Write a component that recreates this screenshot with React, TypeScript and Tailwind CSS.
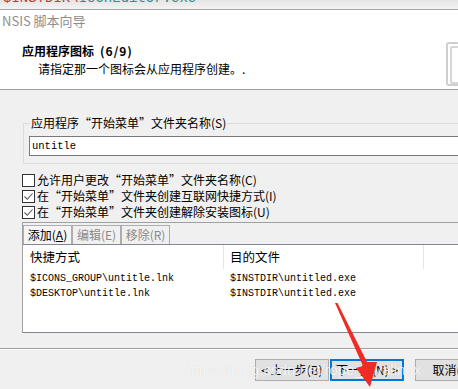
const cjk = "font-['Noto_Sans_CJK_SC','Microsoft_YaHei',sans-serif]";
const mono = "font-['Liberation_Mono','Noto_Sans_CJK_SC',monospace]";

const options = [
  { label: "允许用户更改“开始菜单”文件夹名称(C)", checked: false },
  { label: "在“开始菜单”文件夹创建互联网快捷方式(I)", checked: true },
  { label: "在“开始菜单”文件夹创建解除安装图标(U)", checked: true },
];

const shortcuts = [
  { link: "$ICONS_GROUP\\untitle.lnk", target: "$INSTDIR\\untitled.exe" },
  { link: "$DESKTOP\\untitle.lnk", target: "$INSTDIR\\untitled.exe" },
];

function CheckBox({ checked }: { checked: boolean }) {
  return (
    <div className="w-[13px] h-[13px] border border-[#333] bg-white flex items-center justify-center shrink-0">
      {checked && (
        <svg width="11" height="11" viewBox="0 0 11 11">
          <path d="M1.5 5.5 L4.3 8.3 L9.5 2.5" fill="none" stroke="#555" strokeWidth="1.1" />
        </svg>
      )}
    </div>
  );
}

export default function App() {
  return (
    <div className={`relative w-[458px] h-[389px] overflow-hidden bg-[#f0f0f0] text-[12px] text-black ${cjk}`}>
      {/* edge of the editor window behind */}
      <div className="h-[10px] overflow-hidden bg-gradient-to-b from-[#e4e4e4] to-[#f3f3f3] border-b border-[#a5a5a5]">
        <div className={`-mt-[10px] pl-[3px] ${mono} text-[14px] leading-[16px] whitespace-nowrap`}>
          <span className="text-[#b0473a]">$INSTDIR\</span>
          <span className="text-[#3a8a8e]">IconEditor.exe"</span>
        </div>
      </div>

      {/* header */}
      <div className="relative h-[80px] bg-white border-b border-[#a0a0a0]">
        <div className="pt-[2px] ml-[2px] text-[13px] leading-[18px] text-[#8d8d8d]">NSIS 脚本向导</div>
        <div className="mt-[13px] ml-[22px] font-bold leading-[16px] whitespace-nowrap">
          应用程序图标<span className="ml-[6px] tracking-[1px]">(6/9)</span>
        </div>
        <div className="mt-[2px] ml-[38px] leading-[16px]">请指定那一个图标会从应用程序创建。.</div>
        <div className="absolute left-[446px] top-[32px] w-[24px] h-[44px] rounded-[3px] border-2 border-[#cfcfcf] pl-[2px] pt-[2px]">
          <div className="w-full h-full rounded-[2px] border-2 border-[#d6d6d6]" />
        </div>
      </div>

      {/* body */}
      <div className="h-[258px] pt-[26px] pl-[22px]">
        <fieldset className="ml-[1px] border border-r-0 border-[#dcdcdc] pb-[7px]">
          <legend className="ml-[6px] px-[1px] leading-[14px]">应用程序“开始菜单”文件夹名称(S)</legend>
          <div className={`mt-[6px] ml-[5px] h-[20px] border border-r-0 border-[#7a7a7a] bg-white pl-[2px] ${mono} text-[10.5px] leading-[18px]`}>
            untitle
          </div>
        </fieldset>

        <div className="mt-[8px] flex flex-col">
          {options.map((o) => (
            <div key={o.label} className="h-[16px] flex items-center gap-[2px] whitespace-nowrap">
              <CheckBox checked={o.checked} />
              <span className="leading-[16px]">{o.label}</span>
            </div>
          ))}
        </div>

        <div className="mt-[2px] border-t border-l border-[#a0a0a0]">
          <div className="flex pt-[2px]">
            <div className="w-[49px] h-[19px] border border-b-0 border-[#adadad] bg-[#f5f5f5] text-center leading-[18px]">
              添加(<span className="underline">A</span>)
            </div>
            <div className="w-[49px] h-[19px] border border-b-0 border-[#adadad] text-center leading-[18px] text-[#8a8a8a]">
              编辑(E)
            </div>
            <div className="w-[49px] h-[19px] border border-b-0 border-[#adadad] text-center leading-[18px] text-[#8a8a8a]">
              移除(R)
            </div>
          </div>
          <div className="h-[89px] bg-white border-t border-b border-[#828790]">
            <div className="flex h-[24px] text-[12.5px]">
              <div className="w-[201px] pl-[7px] border-r border-[#e5e5e5] leading-[24px]">快捷方式</div>
              <div className="w-[200px] pl-[6px] border-r border-[#e5e5e5] leading-[24px]">目的文件</div>
            </div>
            <div className={`mt-[2px] ${mono} text-[10px]`}>
              {shortcuts.map((s) => (
                <div key={s.link} className="flex h-[15px] items-center whitespace-nowrap">
                  <div className="w-[201px] pl-[7px]">{s.link}</div>
                  <div className="pl-[6px]">{s.target}</div>
                </div>
              ))}
            </div>
          </div>
        </div>
      </div>

      {/* footer */}
      <div className="h-[1px] bg-[#a0a0a0]" />
      <div className="h-[1px] bg-white" />
      <div className="flex pt-[9px] pl-[255px] whitespace-nowrap">
        <div className="w-[74px] h-[22px] shrink-0 border border-[#adadad] bg-[#e1e1e1] text-center leading-[20px]">
          &lt; 上一步(B)
        </div>
        <div className="ml-[1px] w-[74px] h-[22px] shrink-0 border-2 border-[#0078d7] bg-[#e1e1e1] text-center leading-[18px]">
          下一步(N) &gt;
        </div>
        <div className="ml-[11px] w-[75px] h-[22px] shrink-0 border border-[#adadad] bg-[#e1e1e1] text-center leading-[20px]">
          取消(C)
        </div>
      </div>

      {/* watermark */}
      <div className="absolute left-[186px] top-[359px] font-['Liberation_Sans',sans-serif] text-[15px] text-white/80 whitespace-nowrap [text-shadow:0_0_1px_rgba(0,0,0,0.15)]">
        https://blog.csdn.net/rope_javalinux
      </div>

      {/* red annotation arrow */}
      <svg className="absolute left-0 top-0 pointer-events-none" width="458" height="389">
        <polygon points="335,303 337.5,303 367,362 377,362 370,387 356,368 363,366" fill="#f02a24" />
      </svg>
    </div>
  );
}
